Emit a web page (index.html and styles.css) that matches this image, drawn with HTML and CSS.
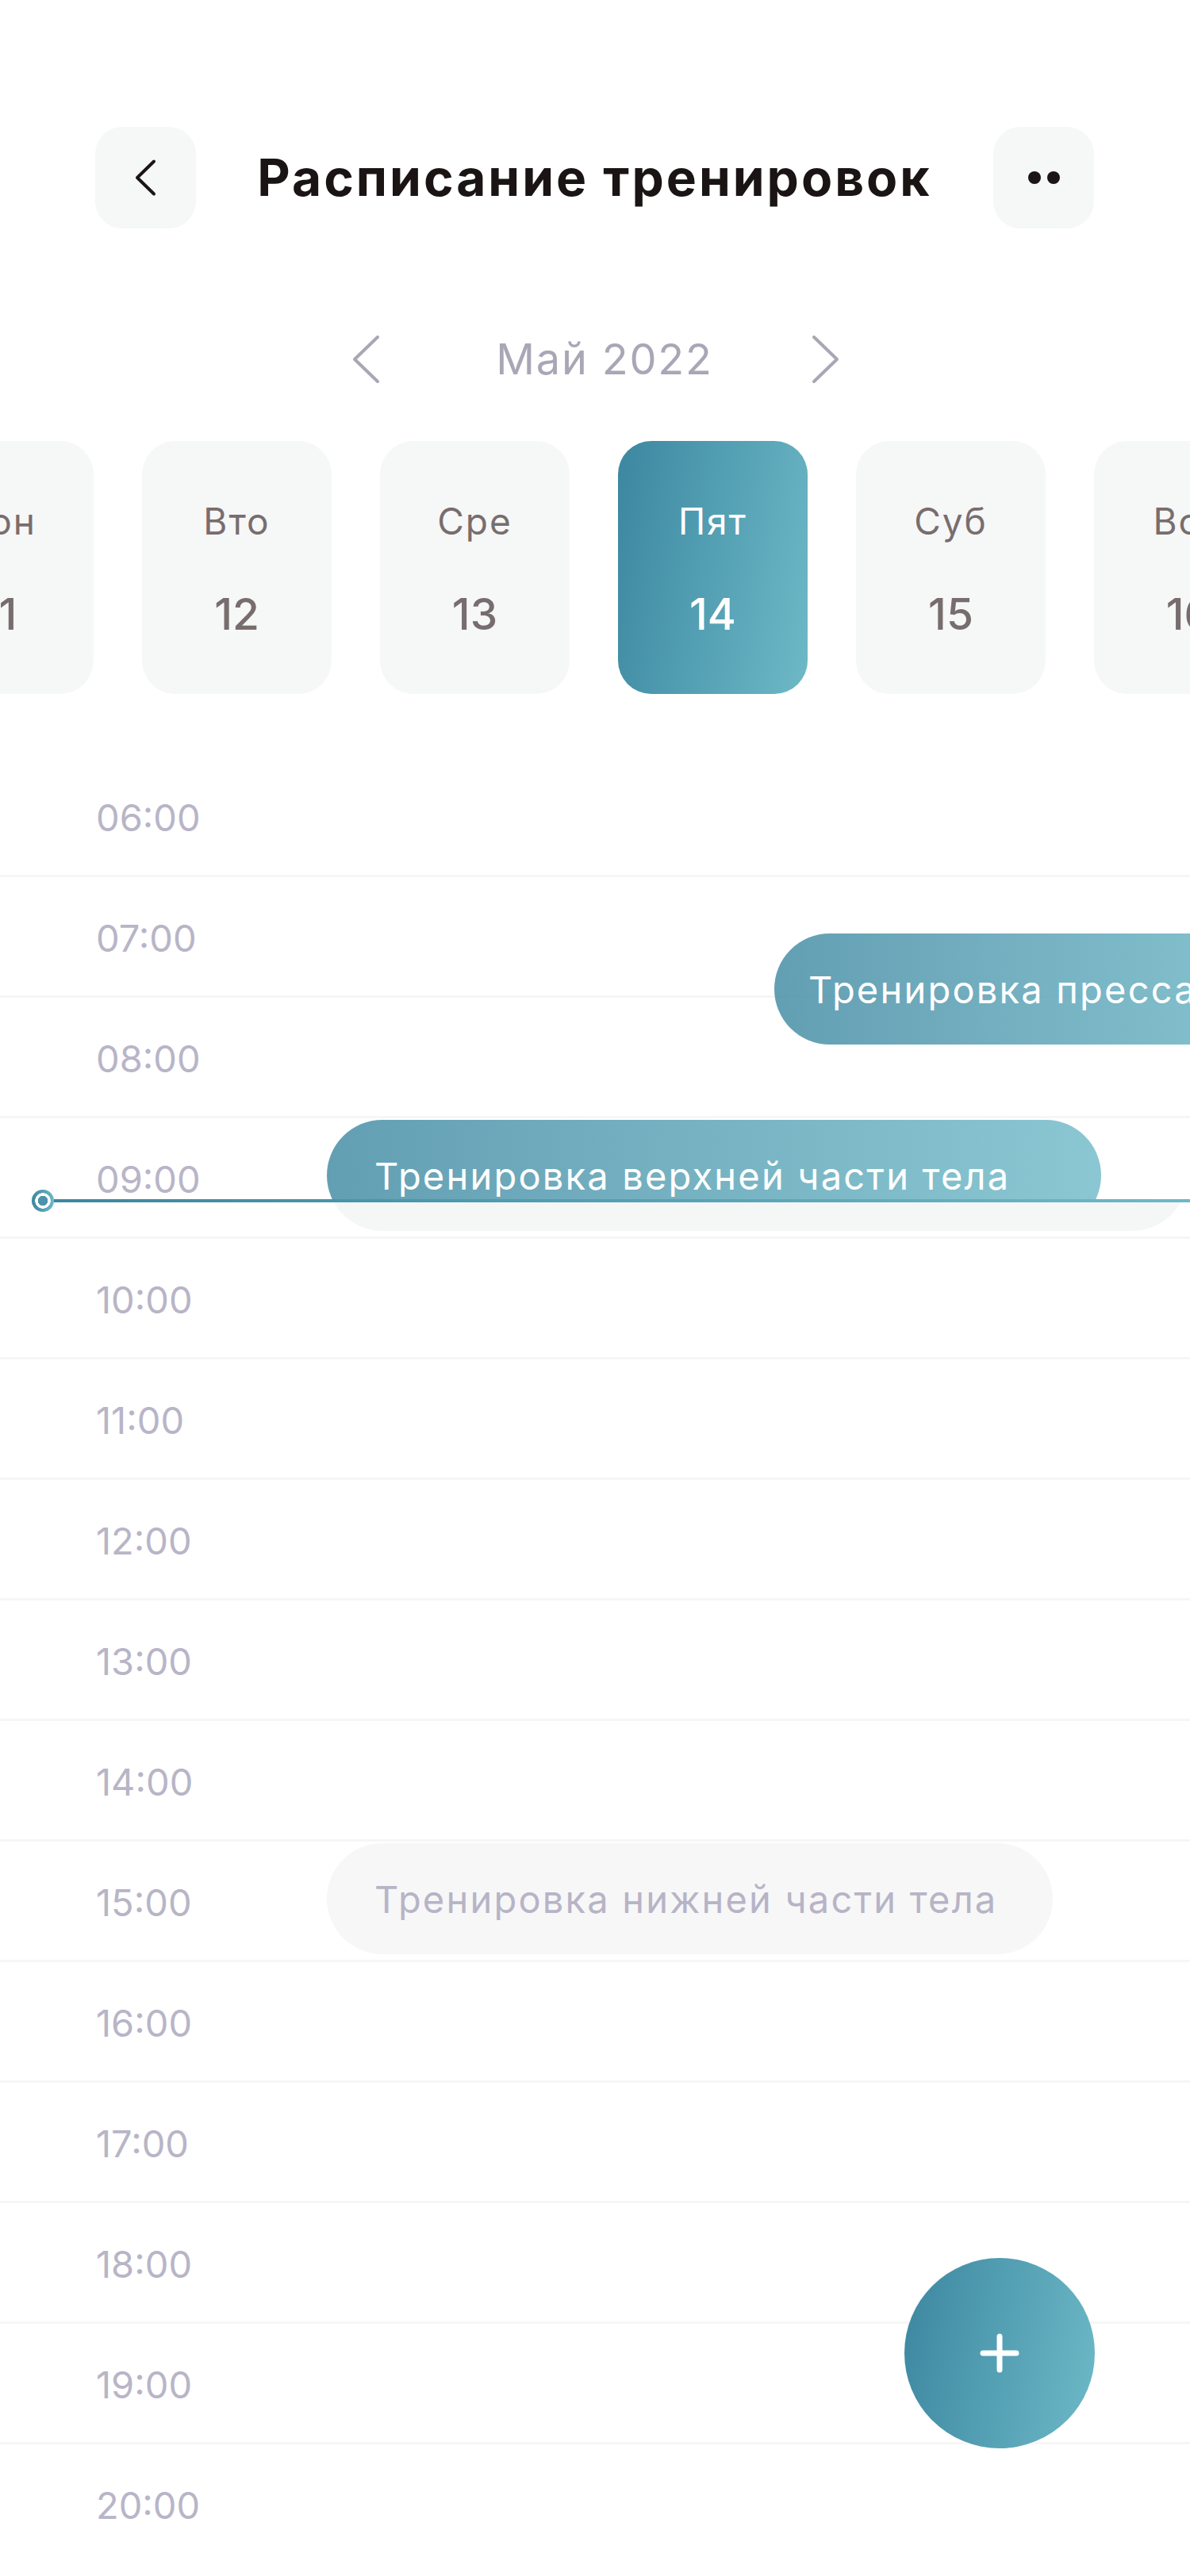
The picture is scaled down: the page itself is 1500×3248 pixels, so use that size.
FILE: index.html
```html
<!DOCTYPE html>
<html lang="ru">
<head>
<meta charset="utf-8">
<title>Расписание тренировок</title>
<link rel="stylesheet" href="styles.css">
</head>
<body>
<div class="screen">
  <header class="topbar">
    <button class="icon-btn" aria-label="Назад">
      <svg width="32" height="48" viewBox="0 0 32 48"><path d="M26 3.5 L5 24 L26 44.5" fill="none" stroke="#1b1515" stroke-width="4" stroke-linecap="round" stroke-linejoin="round"/></svg>
    </button>
    <h1 class="title">Расписание тренировок</h1>
    <button class="icon-btn" aria-label="Ещё">
      <svg width="48" height="20" viewBox="0 0 48 20"><circle cx="12" cy="10" r="8" fill="#1b1515"/><circle cx="36" cy="10" r="8" fill="#1b1515"/></svg>
    </button>
  </header>

  <div class="month-nav">
    <svg class="month-arrow" width="40" height="64" viewBox="0 0 40 64"><path d="M35 4 L6 32 L35 60" fill="none" stroke="#a8a7b3" stroke-width="4" stroke-linecap="round" stroke-linejoin="round"/></svg>
    <span class="month-label">Май 2022</span>
    <svg class="month-arrow" width="40" height="64" viewBox="0 0 40 64"><path d="M5 4 L34 32 L5 60" fill="none" stroke="#a8a7b3" stroke-width="4" stroke-linecap="round" stroke-linejoin="round"/></svg>
  </div>

  <div class="days">
    <div class="day"><span class="day-name">Пон</span><span class="day-num">11</span></div>
    <div class="day"><span class="day-name">Вто</span><span class="day-num">12</span></div>
    <div class="day"><span class="day-name">Сре</span><span class="day-num">13</span></div>
    <div class="day day-active"><span class="day-name">Пят</span><span class="day-num">14</span></div>
    <div class="day"><span class="day-name">Суб</span><span class="day-num">15</span></div>
    <div class="day"><span class="day-name">Вос</span><span class="day-num">16</span></div>
  </div>

  <div class="timeline">
    <div class="row"><span class="time">06:00</span></div>
    <div class="row"><span class="time">07:00</span></div>
    <div class="row"><span class="time">08:00</span></div>
    <div class="row"><span class="time">09:00</span></div>
    <div class="row"><span class="time">10:00</span></div>
    <div class="row"><span class="time">11:00</span></div>
    <div class="row"><span class="time">12:00</span></div>
    <div class="row"><span class="time">13:00</span></div>
    <div class="row"><span class="time">14:00</span></div>
    <div class="row"><span class="time">15:00</span></div>
    <div class="row"><span class="time">16:00</span></div>
    <div class="row"><span class="time">17:00</span></div>
    <div class="row"><span class="time">18:00</span></div>
    <div class="row"><span class="time">19:00</span></div>
    <div class="row row-last"><span class="time">20:00</span></div>

    <div class="event event-press">Тренировка пресса</div>

    <div class="event-split">
      <div class="split-top">
        <div class="event event-upper">Тренировка верхней части тела</div>
      </div>
      <div class="split-bottom">
        <div class="event-ghost"></div>
      </div>
    </div>

    <div class="now-line">
      <span class="now-dot"></span>
      <span class="now-bar"></span>
    </div>

    <div class="event event-lower">Тренировка нижней части тела</div>
  </div>

  <button class="fab" aria-label="Добавить">
    <svg width="52" height="52" viewBox="0 0 52 52"><path d="M26 5 V47 M5 26 H47" fill="none" stroke="#ffffff" stroke-width="7" stroke-linecap="round"/></svg>
  </button>
</div>
</body>
</html>
```

FILE: styles.css
```css
* { box-sizing: border-box; }

html, body {
  margin: 0;
  padding: 0;
  background: #ffffff;
}

body {
  font-family: "Inter", "Noto Sans", "DejaVu Sans", sans-serif;
}

.screen {
  position: relative;
  width: 1500px;
  height: 3248px;
  overflow: hidden;
  background: #ffffff;
}

/* Top bar */
.topbar {
  display: flex;
  align-items: center;
  justify-content: space-between;
  padding: 160px 121px 0 120px;
}

.icon-btn {
  width: 127px;
  height: 128px;
  border: none;
  border-radius: 34px;
  background: #f6f7f7;
  display: flex;
  align-items: center;
  justify-content: center;
  padding: 0;
}

.title {
  margin: 0;
  font-size: 64px;
  font-weight: 700;
  color: #1a1414;
  letter-spacing: 3px;
  line-height: 1;
  padding-left: 0;
}

/* Month nav */
.month-nav {
  display: flex;
  align-items: center;
  justify-content: center;
  margin-top: 133px;
  height: 64px;
  padding-left: 2px;
}

.month-label {
  font-size: 54px;
  font-weight: 400;
  color: #a9a7b6;
  letter-spacing: 1.8px;
  margin: 0 122px 0 144px;
  line-height: 1;
}

/* Days */
.days {
  display: flex;
  gap: 61px;
  margin-left: -121px;
  margin-top: 71px;
}

.day {
  flex: 0 0 239px;
  height: 319px;
  border-radius: 42px;
  background: #f6f7f7;
  display: flex;
  flex-direction: column;
  align-items: center;
  color: #786d6e;
  padding-top: 76px;
}

.day-name {
  font-size: 46px;
  font-weight: 400;
  line-height: 50px;
  letter-spacing: 2px;
}

.day-num {
  font-size: 55px;
  font-weight: 500;
  line-height: 60px;
  margin-top: 62px;
}

.day-active {
  background: linear-gradient(100deg, #3c87a0 0%, #6db9c7 100%);
  color: #ffffff;
}

/* Timeline */
.timeline {
  position: relative;
  margin-top: 79px;
}

.row {
  height: 152px;
  border-bottom: 3px solid #f6f6f6;
  display: flex;
  align-items: center;
  padding-left: 121px;
}

.row-last {
  border-bottom-color: transparent;
}

.time {
  font-size: 47px;
  color: #b8b5c7;
  line-height: 1;
  margin-top: 3px;
}

.event {
  position: absolute;
  height: 140px;
  border-radius: 70px;
  display: flex;
  align-items: center;
  font-size: 47px;
  letter-spacing: 2.2px;
  white-space: nowrap;
}

.event-press {
  top: 223px;
  left: 976px;
  width: 700px;
  padding-left: 43px;
  color: #ffffff;
  background: linear-gradient(90deg, rgba(60,135,160,0.8) 0%, rgba(109,185,199,0.8) 100%);
}

.event-split {
  position: absolute;
  top: 458px;
  left: 412px;
  width: 1088px;
}

.split-top {
  height: 100px;
  overflow: hidden;
}

.split-top .event {
  position: static;
}

.event-upper {
  width: 976px;
  padding-left: 60px;
  color: #ffffff;
  background: linear-gradient(90deg, rgba(60,135,160,0.8) 0%, rgba(109,185,199,0.8) 100%);
}

.split-bottom {
  height: 40px;
  overflow: hidden;
}

.event-ghost {
  width: 1085px;
  height: 140px;
  margin-top: -100px;
  border-radius: 70px;
  background: #f5f7f7;
}

.now-line {
  position: absolute;
  top: 546px;
  left: 40px;
  right: 0;
  height: 28px;
  display: flex;
  align-items: center;
}

.now-dot {
  flex: 0 0 28px;
  width: 28px;
  height: 28px;
  border-radius: 50%;
  background:
    radial-gradient(circle, #4b93aa 0 6px, #ffffff 6.5px 9.5px, transparent 10px),
    linear-gradient(90deg, #3c87a0, #6db9c7);
}

.now-bar {
  flex: 1;
  height: 4px;
  background: linear-gradient(90deg, #3c87a0 0%, #6db9c7 100%);
}

.event-lower {
  top: 1370px;
  left: 412px;
  width: 915px;
  padding-left: 60px;
  color: #b7b4c6;
  background: #f7f7f8;
}

/* FAB */
.fab {
  position: absolute;
  left: 1140px;
  top: 2847px;
  width: 240px;
  height: 240px;
  border: none;
  border-radius: 50%;
  padding: 0;
  background: linear-gradient(100deg, #3c87a0 0%, #6db9c7 100%);
  display: flex;
  align-items: center;
  justify-content: center;
}
```
